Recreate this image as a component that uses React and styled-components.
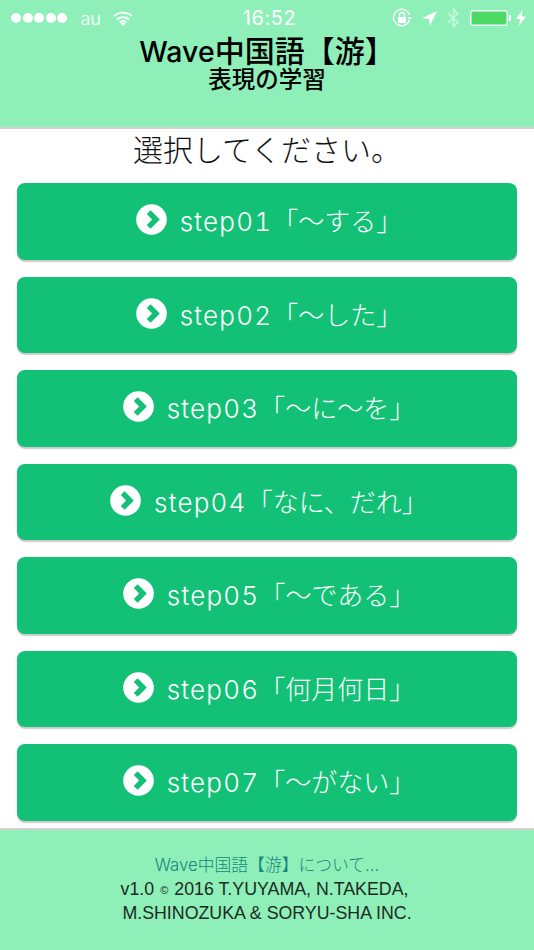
import React from 'react'
import styled, { createGlobalStyle } from 'styled-components'

const steps = [
  { id: 'step01', label: '「〜する」' },
  { id: 'step02', label: '「〜した」' },
  { id: 'step03', label: '「〜に〜を」' },
  { id: 'step04', label: '「なに、だれ」' },
  { id: 'step05', label: '「〜である」' },
  { id: 'step06', label: '「何月何日」' },
  { id: 'step07', label: '「〜がない」' },
]

const GlobalStyle = createGlobalStyle`
  html, body {
    margin: 0;
    padding: 0;
    background: #fff;
  }
  body {
    font-family: "Inter", "Noto Sans CJK JP", sans-serif;
  }
`

const Page = styled.div`
  width: 534px;
  height: 950px;
  display: flex;
  flex-direction: column;
  overflow: hidden;
`

const Header = styled.header`
  height: 127px;
  flex-shrink: 0;
  background: #8eefb9;
  border-bottom: 2px solid #d2d2d2;
`

const StatusBar = styled.div`
  height: 36px;
  padding: 0 8px 0 11px;
  display: flex;
  align-items: center;
  color: #fff;
  position: relative;
`

const Dots = styled.div`
  display: flex;
  gap: 1.6px;
`

const Dot = styled.span`
  width: 10px;
  height: 10px;
  border-radius: 50%;
  background: #fff;
`

const Carrier = styled.span`
  margin-left: 13px;
  font-size: 18px;
  font-weight: 300;
`

const WifiIcon = styled.svg`
  margin-left: 12px;
  width: 20px;
  height: 15px;
`

const Clock = styled.span`
  position: absolute;
  left: 5px;
  right: 0;
  text-align: center;
  font-size: 20px;
  letter-spacing: 0.6px;
  font-weight: 400;
`

const StatusRight = styled.div`
  margin-left: auto;
  display: flex;
  align-items: center;
`

const Battery = styled.div`
  margin-left: 10px;
  width: 38px;
  height: 16px;
  box-sizing: border-box;
  border: 1px solid #fff;
  border-radius: 3px;
  padding: 1px;
`

const BatteryFill = styled.div`
  height: 100%;
  border-radius: 1.5px;
  background: #4cd964;
`

const BatteryCap = styled.div`
  width: 2px;
  height: 6px;
  margin-left: 1px;
  background: #fff;
  border-radius: 0 1px 1px 0;
`

const Title = styled.h1`
  margin: 0;
  text-align: center;
  font-size: 30px;
  line-height: 31px;
  font-weight: 500;
  color: #000;
`

const TitleLatin = styled.span`
  font-size: 28.5px;
`

const Subtitle = styled.h2`
  margin: 0;
  text-align: center;
  font-size: 23.5px;
  line-height: 25px;
  font-weight: 500;
  color: #000;
`

const Main = styled.main`
  flex: 1;
  padding: 0 17px;
  display: flex;
  flex-direction: column;
`

const Prompt = styled.div`
  height: 54px;
  text-align: center;
  font-size: 30px;
  line-height: 42px;
  color: #111;
  font-weight: 300;
`

const StepList = styled.div`
  display: flex;
  flex-direction: column;
  gap: 17px;
`

const StepButton = styled.button`
  height: 76.5px;
  width: 100%;
  border: 0;
  padding: 0 0 3px 4px;
  border-radius: 8px;
  background: #12c175;
  box-shadow: 0 1.5px 1px rgba(0, 0, 0, 0.2);
  color: #fff;
  font-family: "Inter", "Noto Sans CJK JP", sans-serif;
  font-size: 26px;
  font-weight: 300;
  display: flex;
  align-items: center;
  justify-content: center;
  gap: 13px;
`

const StepId = styled.span`
  letter-spacing: 1.2px;
  font-variant-numeric: tabular-nums;
`

const StepIcon = styled.svg`
  width: 31px;
  height: 31px;
  flex-shrink: 0;
`

const Footer = styled.footer`
  height: 96px;
  flex-shrink: 0;
  background: #8eefb9;
  border-top: 2px solid #d2d2d2;
  padding-top: 24px;
  text-align: center;
  font-family: "Liberation Sans", "Noto Sans CJK JP", sans-serif;
  font-size: 17.8px;
  line-height: 23.5px;
  color: #1c2b22;
`

const AboutLink = styled.a`
  display: block;
  color: #14877a;
  font-family: "Inter", "Noto Sans CJK JP", sans-serif;
  font-size: 16.8px;
  font-weight: 300;
`

const Copy = styled.span`
  margin: 0 6px;
  font-size: 11px;
  vertical-align: 1px;
`

function ChevronCircle() {
  return (
    <StepIcon viewBox="0 0 31 31">
      <circle cx="15.5" cy="15.5" r="15.3" fill="#fff" />
      <path d="M12.7 8.2 L20 15.5 L12.7 22.8" fill="none" stroke="#12c175" strokeWidth="5.4" />
    </StepIcon>
  )
}

export default function App() {
  return (
    <Page>
      <GlobalStyle />
      <Header>
        <StatusBar>
          <Dots>
            {[0, 1, 2, 3, 4].map((i) => (
              <Dot key={i} />
            ))}
          </Dots>
          <Carrier>au</Carrier>
          <WifiIcon viewBox="0 0 21 16">
            <path d="M1 5.5 C6.5 0.5 14.5 0.5 20 5.5 M4 9 C7.5 5.8 13.5 5.8 17 9 M7 12 C9 10.4 12 10.4 14 12" fill="none" stroke="#fff" strokeWidth="2" />
            <path d="M10.5 16 L7.8 13.2 C9.4 12 11.6 12 13.2 13.2 Z" fill="#fff" />
          </WifiIcon>
          <Clock>16:52</Clock>
          <StatusRight>
            <svg width="20" height="20" viewBox="0 0 20 20">
              <path d="M17.5 12 A8.2 8.2 0 1 1 17.5 7" fill="none" stroke="#fff" strokeWidth="1.3" />
              <path d="M15.5 9 L20 9 L17.7 12 Z" fill="#fff" />
              <rect x="6" y="9" width="8" height="6" rx="1" fill="#fff" />
              <path d="M7.5 9 V7 A2.5 2.5 0 0 1 12.5 7 V9" fill="none" stroke="#fff" strokeWidth="1.3" />
            </svg>
            <svg width="15" height="15" viewBox="0 0 15 15" style={{ marginLeft: 10 }}>
              <path d="M15 0 L8 15 L7 8 L0 7 Z" fill="#fff" />
            </svg>
            <svg width="13" height="20" viewBox="0 0 12 19" style={{ marginLeft: 10 }}>
              <path d="M1 5 L10 13.5 L6 18 V1 L10 5.5 L1 14" fill="none" stroke="#fff" strokeOpacity="0.5" strokeWidth="1.6" />
            </svg>
            <Battery>
              <BatteryFill />
            </Battery>
            <BatteryCap />
            <svg width="10" height="16" viewBox="0 0 10 16" style={{ marginLeft: 5 }}>
              <path d="M6.5 0 L0 9 H4 L3 16 L10 6.5 H5.8 Z" fill="#fff" />
            </svg>
          </StatusRight>
        </StatusBar>
        <Title>
          <TitleLatin>Wave</TitleLatin>中国語【游】
        </Title>
        <Subtitle>表現の学習</Subtitle>
      </Header>
      <Main>
        <Prompt>選択してください。</Prompt>
        <StepList>
          {steps.map((step) => (
            <StepButton key={step.id}>
              <ChevronCircle />
              <span>
                <StepId>{step.id}</StepId>
                {step.label}
              </span>
            </StepButton>
          ))}
        </StepList>
      </Main>
      <Footer>
        <AboutLink>Wave中国語【游】について...</AboutLink>
        v1.0<Copy>©</Copy>2016 T.YUYAMA, N.TAKEDA,&nbsp;
        <br />
        M.SHINOZUKA &amp; SORYU-SHA INC.
      </Footer>
    </Page>
  )
}
